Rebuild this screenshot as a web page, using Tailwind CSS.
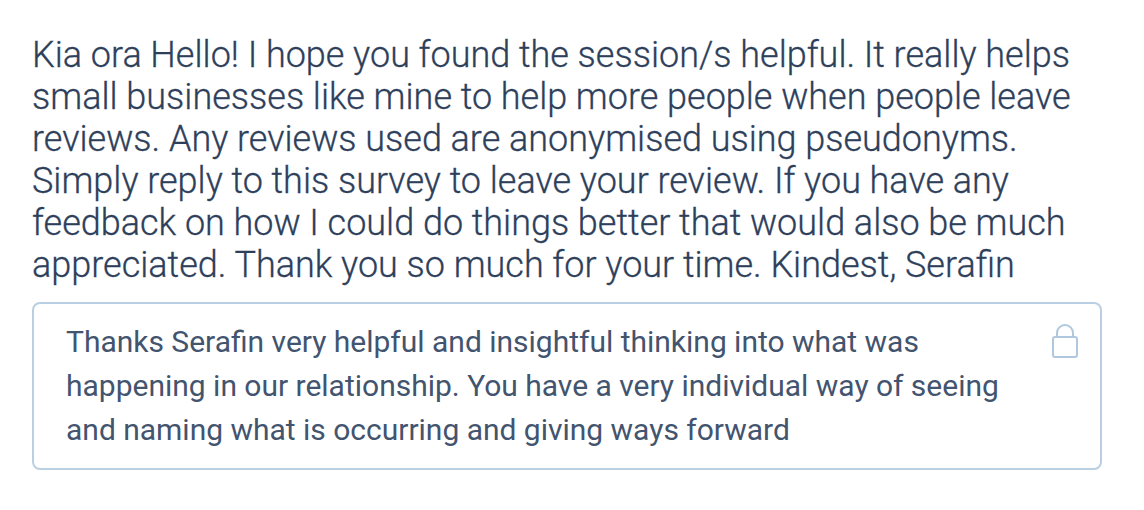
<html>
<head>
    <script src="https://cdn.jsdelivr.net/npm/@tailwindcss/browser@4"></script>
</head>
<body class="bg-white font-['Roboto',sans-serif]">
    <div class="w-[1102px] pl-8 pt-[34px]">
        <p class="whitespace-nowrap text-[36px] leading-[42px] font-light [word-spacing:-0.1px] [-webkit-text-stroke:0.3px_#2e3f5b] text-[#2e3f5b]">
            Kia ora Hello! I hope you found the session/s helpful. It really helps<br>
            small businesses like mine to help more people when people leave<br>
            reviews. Any reviews used are anonymised using pseudonyms.<br>
            Simply reply to this survey to leave your review. If you have any<br>
            feedback on how I could do things better that would also be much<br>
            appreciated. Thank you so much for your time. Kindest, Serafin
        </p>
        <div class="mt-4 flex h-[168px] justify-between rounded-lg border-2 border-[#bad0e2] pl-8 pr-[22px] pt-4">
            <p class="whitespace-nowrap text-[30px] leading-[44px] [word-spacing:-0.07px] text-[#43546f]">
                Thanks Serafin very helpful and insightful thinking into what was<br>
                happening in our relationship. You have a very individual way of seeing<br>
                and naming what is occurring and giving ways forward
            </p>
            <svg class="mt-1 h-9 w-7" viewBox="0 0 28 36" fill="none" stroke="#b0c8df" stroke-width="2">
                <rect x="3" y="13" width="24" height="20" rx="2" />
                <path d="M7 13V9a8 8 0 0 1 16 0v4" />
            </svg>
        </div>
    </div>
</body>
</html>
